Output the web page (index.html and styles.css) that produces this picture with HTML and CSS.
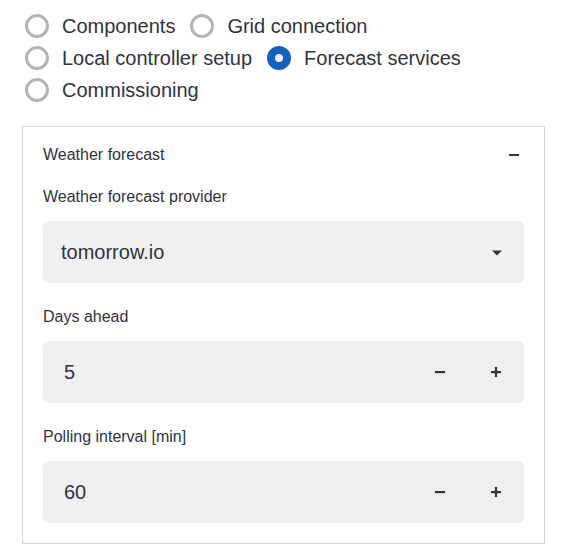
FILE: index.html
```html
<!DOCTYPE html>
<html lang="en">
<head>
<meta charset="utf-8">
<title>Forecast services</title>
<link rel="stylesheet" href="styles.css">
</head>
<body>
<div class="page">
  <div class="radio-group" role="radiogroup">
    <label class="radio"><span class="circle"></span><span class="radio-label">Components</span></label>
    <label class="radio"><span class="circle"></span><span class="radio-label">Grid connection</span></label>
    <label class="radio"><span class="circle"></span><span class="radio-label">Local controller setup</span></label>
    <label class="radio"><span class="circle checked"></span><span class="radio-label">Forecast services</span></label>
    <label class="radio"><span class="circle"></span><span class="radio-label">Commissioning</span></label>
  </div>

  <section class="expander">
    <div class="expander-header">
      <span class="expander-title">Weather forecast</span>
      <svg class="collapse-icon" width="10" height="4" viewBox="0 0 10 4"><rect x="0" y="1" width="10" height="2" fill="#31333f"/></svg>
    </div>
    <div class="expander-body">
      <div class="field">
        <div class="field-label">Weather forecast provider</div>
        <div class="select">
          <span class="value">tomorrow.io</span>
          <svg class="caret" width="10" height="6" viewBox="0 0 10 6"><path d="M0 0.5 L10 0.5 L5 5.5 Z" fill="#31333f"/></svg>
        </div>
      </div>
      <div class="field">
        <div class="field-label">Days ahead</div>
        <div class="number-input">
          <div class="number-value">5</div>
          <div class="step-btn"><svg width="10" height="10" viewBox="0 0 10 10"><rect x="0" y="4" width="10" height="2.2" fill="#31333f"/></svg></div>
          <div class="step-btn"><svg width="10" height="10" viewBox="0 0 10 10"><rect x="0" y="4" width="10" height="2.2" fill="#31333f"/><rect x="3.9" y="0" width="2.2" height="10" fill="#31333f"/></svg></div>
        </div>
      </div>
      <div class="field">
        <div class="field-label">Polling interval [min]</div>
        <div class="number-input">
          <div class="number-value">60</div>
          <div class="step-btn"><svg width="10" height="10" viewBox="0 0 10 10"><rect x="0" y="4" width="10" height="2.2" fill="#31333f"/></svg></div>
          <div class="step-btn"><svg width="10" height="10" viewBox="0 0 10 10"><rect x="0" y="4" width="10" height="2.2" fill="#31333f"/><rect x="3.9" y="0" width="2.2" height="10" fill="#31333f"/></svg></div>
        </div>
      </div>
    </div>
  </section>
</div>
</body>
</html>
```

FILE: styles.css
```css
* { box-sizing: border-box; }

html, body {
  margin: 0;
  padding: 0;
  background: #ffffff;
}

body {
  font-family: "Liberation Sans", Arial, sans-serif;
  color: #31333f;
}

.page {
  padding: 10px 0 0 22px;
  width: 569px;
}

.radio-group {
  display: flex;
  flex-wrap: wrap;
  column-gap: 15px;
  margin-left: 3px;
  width: 530px;
}

.radio {
  display: flex;
  align-items: center;
  gap: 13px;
  height: 32px;
  font-size: 20px;
  line-height: 32px;
}

.circle {
  width: 24px;
  height: 24px;
  border-radius: 50%;
  border: 3px solid #b5b5b9;
  background: #ffffff;
  flex: none;
}

.circle.checked {
  border: 8px solid #1560bd;
  background: #f0f2f6;
}

.expander {
  margin-top: 20px;
  width: 523px;
  border: 1px solid #d6d6d9;
  padding: 16px 20px 20px 20px;
}

.expander-header {
  display: flex;
  justify-content: space-between;
  align-items: center;
  height: 24px;
  font-size: 16px;
  line-height: 24px;
}

.collapse-icon {
  margin-right: 5px;
}

.expander-body {
  display: flex;
  flex-direction: column;
  gap: 22px;
  margin-top: 18px;
}

.field {
  display: flex;
  flex-direction: column;
  gap: 12px;
}

.field-label {
  font-size: 16px;
  line-height: 24px;
  height: 24px;
}

.select {
  display: flex;
  align-items: center;
  justify-content: space-between;
  height: 62px;
  background: #f0f0f0;
  border-radius: 6px;
  padding: 0 22px 0 18px;
  font-size: 20px;
}

.caret {
  margin-top: 1px;
}

.number-input {
  display: flex;
  height: 62px;
  background: #f0f0f0;
  border-radius: 6px;
  font-size: 20px;
}

.number-value {
  flex: 1;
  display: flex;
  align-items: center;
  padding-left: 21px;
}

.step-btn {
  width: 56px;
  display: flex;
  align-items: center;
  justify-content: center;
}
```
